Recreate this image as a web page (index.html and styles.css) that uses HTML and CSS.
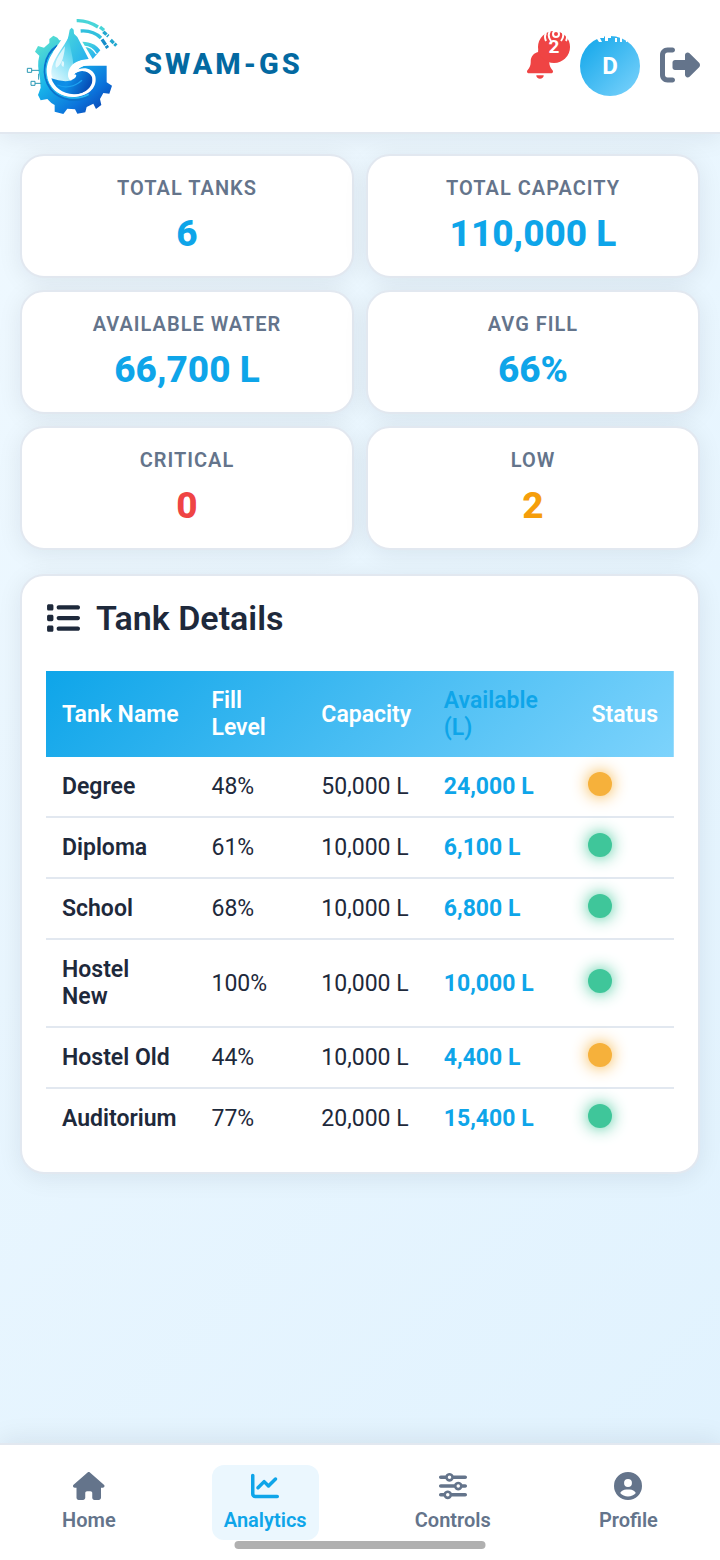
FILE: index.html
```html
<!DOCTYPE html>
<html lang="en">
  <head>
    <meta charset="UTF-8" />
    <meta name="viewport" content="width=device-width, initial-scale=1.0" />
    <title>SWAM-GS - Analytics</title>
    <link rel="stylesheet" href="styles.css">
  </head>
  <body>
    <header class="header">
      <div class="brand">
        <svg class="logo" viewBox="0 -3 312 312" aria-hidden="true">
          <defs>
            <linearGradient id="gear" x1="0.1" y1="0" x2="0.9" y2="1">
              <stop offset="0" stop-color="#5fe3cf" />
              <stop offset="0.4" stop-color="#18b4ea" />
              <stop offset="0.75" stop-color="#0b74dc" />
              <stop offset="1" stop-color="#0a3fae" />
            </linearGradient>
            <linearGradient id="sky" x1="0" y1="0" x2="1" y2="1">
              <stop offset="0" stop-color="#4edbd9" />
              <stop offset="1" stop-color="#1fa9f2" />
            </linearGradient>
            <linearGradient id="drop" x1="0.8" y1="0" x2="0.3" y2="1">
              <stop offset="0" stop-color="#35c9e6" />
              <stop offset="0.6" stop-color="#9be6f8" />
              <stop offset="1" stop-color="#d9f6fd" />
            </linearGradient>
            <linearGradient id="wave" x1="0" y1="0" x2="1" y2="0.3">
              <stop offset="0" stop-color="#0a86dc" />
              <stop offset="0.5" stop-color="#0e8fe8" />
              <stop offset="1" stop-color="#0750b8" />
            </linearGradient>
          </defs>
          <!-- gear -->
          <path fill="url(#gear)" d="M138 74L118 76L112 68L100 62L88 72L88 84L72 98L54 93L45 110L58 122Q50 150 60 190L62 218L54 240L62 256L82 252Q92 264 104 270L104 290L130 297L142 281L165 283L172 296L196 292L200 276L220 266L228 282L244 270L240 252L250 234L268 236L276 212L260 202L260 152L160 152Z" />
          <path fill="none" stroke="#0a73cd" stroke-width="6" d="M112 92C70 120 62 180 92 222C120 258 175 266 214 240" />
          <path fill="none" stroke="#2ab9f0" stroke-width="5" d="M104 108C72 140 70 184 98 220C124 250 170 258 206 238" />
          <!-- circuit nodes -->
          <g fill="none" stroke="#2a98b4" stroke-width="3">
            <path d="M22 160H35V172H22ZM35 166H58M33 199H45V211H33ZM45 205H64M56 176V194" />
          </g>
          <!-- white outline of the drop -->
          <path fill="#fff" d="M148 38L164 42L178 56L222 138L180 158L150 190L90 180L100 110Z" />
          <path fill="#fff" d="M146 52C122 86 78 122 80 172C84 222 122 248 164 246C212 242 232 214 226 184C218 158 186 154 166 168C178 134 150 100 146 52Z" />
          <!-- sky and drop -->
          <path fill="url(#sky)" d="M146 60L149 44L155 38L161 44L162 56L172 66L206 132C176 134 158 146 148 168L126 160Z" />
          <path fill="url(#drop)" d="M147 64C130 100 96 134 94 168C92 190 106 204 132 203L152 196C140 184 146 164 160 148C158 118 148 94 147 64Z" />
          <path fill="#fff" opacity="0.7" d="M135 94C114 124 102 142 108 158C120 156 132 134 135 94ZM127 138Q136 140 130 156Q120 152 127 138Z" />
          <!-- wave -->
          <path fill="url(#wave)" d="M94 190C118 198 146 204 164 190C174 180 166 176 162 180C172 164 204 160 216 182C224 212 198 238 162 238C126 236 102 216 94 190Z" />
          <path fill="none" stroke="#1ea3f0" stroke-width="4" d="M112 210C136 220 164 216 186 196" />
          <path fill="none" stroke="#fff" stroke-width="6" stroke-linecap="round" d="M86 190C96 226 128 243 162 242C202 240 226 214 220 188C212 164 184 160 168 170" />
          <path fill="#fff" d="M263 150H210C180 152 166 164 162 182C152 184 148 192 156 198C142 194 142 176 148 162C158 142 176 134 204 134H240L263 140Z" />
          <!-- signal arcs -->
          <path fill="url(#sky)" d="M187 80C212 80 232 92 241 106L218 132Z" />
          <path fill="none" stroke="#fff" stroke-width="4" d="M193 94C208 94 220 102 229 117" />
          <g fill="none" stroke-width="10">
            <path stroke="#48d5d8" d="M170 17C192 16 214 23 234 36M240 36L252 46" />
            <path stroke="#22a7cf" d="M250 50L265 64M272 75L289 92" stroke-dasharray="13 3" />
            <path stroke="#31c0de" d="M182 48C208 46 228 54 243 69" />
            <path stroke="#158dca" d="M246 73L263 99" stroke-dasharray="20 3" />
          </g>
        </svg>
        <h1 class="brand-name">SWAM-GS</h1>
      </div>

      <div class="header-actions">
        <button class="icon-button bell-button" aria-label="Notifications">
          <svg class="bell-icon" viewBox="0 0 448 512" fill="currentColor"><path d="M224 0c-17.700 0-32 14.300-32 32V51.200C119 66 64 130.600 64 208v18.800c0 47-17.300 92.400-48.500 127.600l-7.400 8.300c-8.400 9.400-10.400 22.900-5.300 34.400S19.400 416 32 416H416c12.600 0 24-7.400 29.200-18.900s3.100-25-5.300-34.400l-7.400-8.300C401.300 319.200 384 273.900 384 226.800V208c0-77.400-55-142-128-156.800V32c0-17.700-14.300-32-32-32zm45.300 493.300c12-12 18.700-28.300 18.700-45.300H160c0 17 6.700 33.300 18.700 45.300s28.300 18.700 45.300 18.700s33.300-6.700 45.300-18.700z" /></svg>
          <span class="badge">
            <svg class="badge-signal" viewBox="0 0 24 12" fill="none" stroke="#fff" stroke-width="2" aria-hidden="true">
              <circle cx="12" cy="3" r="3" />
              <path d="M6 0Q3 5 7 10M18 0Q21 5 17 10M2 2Q0 6 2 10M22 2Q24 6 22 10" />
            </svg>
            2
          </span>
        </button>
        <button class="avatar" aria-label="Account">
          <svg class="avatar-marks" viewBox="0 0 34 8" fill="#fff" aria-hidden="true">
            <path d="M0 3L4 3L6 6L9 6L7 2H11V0H0ZM12 0H18V2H15V5H12ZM22 2H24V6H22ZM27 1H29V6H27ZM33 0H34V6H33Z" />
          </svg>
          D
        </button>
        <button class="icon-button logout-button" aria-label="Log out">
          <svg class="logout-icon" viewBox="0 0 512 512" fill="currentColor"><path d="M377.900 105.900L500.700 228.700c7.200 7.200 11.300 17.100 11.300 27.300s-4.100 20.100-11.300 27.300L377.900 406.100c-6.400 6.400-15 9.900-24 9.900c-18.700 0-33.900-15.200-33.900-33.900l0-62.100-128 0c-17.700 0-32-14.300-32-32l0-64c0-17.700 14.300-32 32-32l128 0 0-62.100c0-18.700 15.200-33.900 33.900-33.900c9 0 17.600 3.600 24 9.900zM160 96L96 96c-17.700 0-32 14.300-32 32l0 256c0 17.700 14.300 32 32 32l64 0c17.700 0 32 14.300 32 32s-14.300 32-32 32l-64 0c-53 0-96-43-96-96L0 128C0 75 43 32 96 32l64 0c17.700 0 32 14.300 32 32s-14.300 32-32 32z" /></svg>
        </button>
      </div>
    </header>

    <main class="content">
      <section class="stats">
        <div class="stat-card">
          <div class="stat-label">Total Tanks</div>
          <div class="stat-value">6</div>
        </div>
        <div class="stat-card">
          <div class="stat-label">Total Capacity</div>
          <div class="stat-value">110,000 L</div>
        </div>
        <div class="stat-card">
          <div class="stat-label">Available Water</div>
          <div class="stat-value">66,700 L</div>
        </div>
        <div class="stat-card">
          <div class="stat-label">Avg Fill</div>
          <div class="stat-value">66%</div>
        </div>
        <div class="stat-card">
          <div class="stat-label">Critical</div>
          <div class="stat-value critical">0</div>
        </div>
        <div class="stat-card">
          <div class="stat-label">Low</div>
          <div class="stat-value low">2</div>
        </div>
      </section>

      <section class="details-card">
        <h2 class="details-title">
          <svg class="list-icon" viewBox="0 0 512 512" fill="currentColor" aria-hidden="true"><path d="M40 48C26.700 48 16 58.700 16 72v48c0 13.300 10.700 24 24 24H88c13.300 0 24-10.700 24-24V72c0-13.300-10.700-24-24-24H40zM192 64c-17.700 0-32 14.300-32 32s14.300 32 32 32H480c17.700 0 32-14.300 32-32s-14.300-32-32-32H192zm0 160c-17.700 0-32 14.300-32 32s14.300 32 32 32H480c17.700 0 32-14.300 32-32s-14.300-32-32-32H192zm0 160c-17.700 0-32 14.300-32 32s14.300 32 32 32H480c17.700 0 32-14.300 32-32s-14.300-32-32-32H192zM16 232v48c0 13.300 10.700 24 24 24H88c13.300 0 24-10.700 24-24V232c0-13.300-10.700-24-24-24H40c-13.300 0-24 10.700-24 24zM40 368c-13.300 0-24 10.700-24 24v48c0 13.300 10.700 24 24 24H88c13.300 0 24-10.700 24-24V392c0-13.300-10.700-24-24-24H40z" /></svg>
          Tank Details
        </h2>
        <table class="tank-table">
          <colgroup>
            <col class="col-name">
            <col class="col-fill">
            <col class="col-capacity">
            <col class="col-available">
            <col class="col-status">
          </colgroup>
          <thead>
            <tr>
              <th>Tank Name</th>
              <th>Fill Level</th>
              <th>Capacity</th>
              <th class="available">Available (L)</th>
              <th class="status">Status</th>
            </tr>
          </thead>
          <tbody>
            <tr>
              <td class="name">Degree</td>
              <td>48%</td>
              <td>50,000 L</td>
              <td class="available">24,000 L</td>
              <td><span class="dot dot-low"></span></td>
            </tr>
            <tr>
              <td class="name">Diploma</td>
              <td>61%</td>
              <td>10,000 L</td>
              <td class="available">6,100 L</td>
              <td><span class="dot"></span></td>
            </tr>
            <tr>
              <td class="name">School</td>
              <td>68%</td>
              <td>10,000 L</td>
              <td class="available">6,800 L</td>
              <td><span class="dot"></span></td>
            </tr>
            <tr>
              <td class="name">Hostel New</td>
              <td>100%</td>
              <td>10,000 L</td>
              <td class="available">10,000 L</td>
              <td><span class="dot"></span></td>
            </tr>
            <tr>
              <td class="name">Hostel Old</td>
              <td>44%</td>
              <td>10,000 L</td>
              <td class="available">4,400 L</td>
              <td><span class="dot dot-low"></span></td>
            </tr>
            <tr>
              <td class="name">Auditorium</td>
              <td>77%</td>
              <td>20,000 L</td>
              <td class="available">15,400 L</td>
              <td><span class="dot"></span></td>
            </tr>
          </tbody>
        </table>
      </section>
    </main>

    <nav class="bottom-nav">
      <a href="#home" class="nav-item">
        <svg class="nav-icon" viewBox="0 0 576 512" fill="currentColor"><path d="M575.800 255.500c0 18-15 32.100-32 32.100h-32l.7 160.200c0 2.700-.2 5.400-.5 8.100V472c0 22.100-17.900 40-40 40H392c-22.100 0-40-17.900-40-40V384c0-17.700-14.300-32-32-32H256c-17.700 0-32 14.300-32 32v88c0 22.100-17.900 40-40 40H104c-22.100 0-40-17.900-40-40V287.600H32c-18 0-32-14-32-32.100c0-9 3-17 10-24L266.400 8c7-7 15-8 22-8s15 2 21 7L564.800 231.500c8 7 12 15 11 24z" /></svg>
        <span>Home</span>
      </a>
      <a href="#analytics" class="nav-item active">
        <svg class="nav-icon" viewBox="0 0 512 512" fill="currentColor"><path d="M64 64c0-17.700-14.300-32-32-32S0 46.300 0 64V400c0 44.200 35.800 80 80 80H480c17.700 0 32-14.300 32-32s-14.300-32-32-32H80c-8.800 0-16-7.200-16-16V64zm406.600 86.600c12.500-12.500 12.500-32.800 0-45.300s-32.800-12.500-45.300 0L320 210.700l-57.400-57.400c-12.500-12.500-32.800-12.500-45.300 0l-112 112c-12.500 12.500-12.500 32.800 0 45.300s32.800 12.500 45.300 0L240 221.300l57.400 57.400c12.500 12.500 32.800 12.500 45.300 0l128-128z" /></svg>
        <span>Analytics</span>
      </a>
      <a href="#controls" class="nav-item">
        <svg class="nav-icon" viewBox="0 0 512 512" fill="currentColor"><path d="M0 416c0 17.700 14.300 32 32 32l54.700 0c12.300 28.300 40.500 48 73.300 48s61-19.700 73.300-48L480 448c17.700 0 32-14.300 32-32s-14.300-32-32-32l-246.700 0c-12.300-28.300-40.500-48-73.300-48s-61 19.700-73.300 48L32 384c-17.700 0-32 14.300-32 32zm128 0a32 32 0 1 1 64 0 32 32 0 1 1 -64 0zM320 256a32 32 0 1 1 64 0 32 32 0 1 1 -64 0zm32-80c-32.800 0-61 19.700-73.300 48L32 224c-17.700 0-32 14.300-32 32s14.300 32 32 32l246.700 0c12.300 28.300 40.500 48 73.300 48s61-19.700 73.300-48l54.700 0c17.700 0 32-14.300 32-32s-14.300-32-32-32l-54.700 0c-12.300-28.300-40.500-48-73.300-48zM192 128a32 32 0 1 1 0-64 32 32 0 1 1 0 64zm73.300-64C253 35.700 224.800 16 192 16s-61 19.700-73.300 48L32 64C14.300 64 0 78.300 0 96s14.300 32 32 32l86.700 0c12.300 28.300 40.500 48 73.300 48s61-19.700 73.300-48L480 128c17.700 0 32-14.300 32-32s-14.300-32-32-32L265.300 64z" /></svg>
        <span>Controls</span>
      </a>
      <a href="#profile" class="nav-item">
        <svg class="nav-icon" viewBox="0 0 512 512" fill="currentColor"><path d="M399 384.200C376.900 345.800 335.400 320 288 320H224c-47.400 0-88.900 25.800-111 64.200c35.200 39.200 86.200 63.800 143 63.800s107.800-24.700 143-63.800zM0 256a256 256 0 1 1 512 0A256 256 0 1 1 0 256zm256 16a72 72 0 1 0 0-144 72 72 0 1 0 0 144z" /></svg>
        <span>Profile</span>
      </a>
      <div class="gesture-bar"></div>
    </nav>
  </body>
</html>
```
FILE: styles.css
```css
* {
  margin: 0;
  padding: 0;
  box-sizing: border-box;
}

body {
  font-family: Roboto, "Liberation Sans", sans-serif;
  background: linear-gradient(135deg, #f0f9ff 0%, #e0f2fe 100%);
  color: #1e293b;
  min-height: 100vh;
  display: flex;
  flex-direction: column;
}

button {
  font-family: inherit;
  border: none;
  background: none;
  cursor: pointer;
}

/* Header */
.header {
  display: flex;
  align-items: center;
  justify-content: space-between;
  padding: 14px 20px;
  background: #fff;
  border-bottom: 2px solid #e2e8f0;
  box-shadow: 0 4px 24px rgba(15, 23, 42, 0.08);
}

.brand {
  display: flex;
  align-items: center;
  gap: 20px;
}

.logo {
  width: 104px;
  height: 104px;
}

.brand-name {
  padding-bottom: 4px;
  font-size: 29px;
  font-weight: 800;
  letter-spacing: 3px;
  color: #0369a1;
}

.header-actions {
  display: flex;
  align-items: center;
  gap: 20px;
}

.icon-button {
  display: flex;
  align-items: center;
  justify-content: center;
  width: 40px;
  height: 40px;
  padding-bottom: 2px;
}

.bell-button {
  position: relative;
  padding-bottom: 4px;
  color: #ef4444;
}

.bell-icon {
  width: 26px;
  height: 30px;
}

.badge {
  position: absolute;
  top: -15px;
  right: -10px;
  width: 32px;
  height: 32px;
  border-radius: 50%;
  background: #ef4444;
  color: #fff;
  font-size: 19px;
  font-weight: 700;
  line-height: 32px;
  text-align: center;
}

.badge-signal {
  position: absolute;
  top: 0;
  left: 6px;
  width: 24px;
  height: 12px;
}

.avatar {
  position: relative;
  width: 60px;
  height: 60px;
  border-radius: 50%;
  background: linear-gradient(135deg, #0ea5e9, #7dd3fc);
  color: #fff;
  font-size: 24px;
  font-weight: 700;
}

.avatar-marks {
  position: absolute;
  top: 0;
  left: 13px;
  width: 34px;
  height: 8px;
}

.logout-button {
  color: #64748b;
}

.logout-icon {
  width: 40px;
  height: 40px;
}

/* Stats */
.content {
  flex: 1;
  padding: 20px;
}

.stats {
  display: grid;
  grid-template-columns: 1fr 1fr;
  gap: 12px;
  margin-bottom: 24px;
}

.stat-card,
.details-card {
  background: #fff;
  border: 2px solid #e2e8f0;
  border-radius: 24px;
  box-shadow: 0 4px 24px rgba(15, 23, 42, 0.08);
}

.stat-card {
  padding: 20px;
  text-align: center;
}

.stat-label {
  margin-bottom: 12px;
  font-size: 20px;
  font-weight: 600;
  line-height: 24px;
  letter-spacing: 1px;
  text-transform: uppercase;
  color: #64748b;
}

.stat-value {
  font-size: 37px;
  font-weight: 800;
  line-height: 44px;
  color: #0ea5e9;
}

.stat-value.critical {
  color: #ef4444;
}

.stat-value.low {
  color: #f59e0b;
}

/* Tank table */
.details-card {
  padding: 24px;
}

.details-title {
  display: flex;
  align-items: center;
  gap: 16px;
  margin-bottom: 35px;
  font-size: 34px;
  font-weight: 600;
  line-height: 36px;
}

.list-icon {
  width: 34px;
  height: 34px;
}

.tank-table {
  width: 100%;
  table-layout: fixed;
  border-collapse: separate;
  border-spacing: 0;
  font-size: 23px;
  line-height: 27px;
}

.col-name {
  width: 23.8%;
}

.col-fill {
  width: 17.5%;
}

.col-capacity {
  width: 19.5%;
}

.col-available {
  width: 23%;
}

.tank-table thead {
  background: linear-gradient(135deg, #0ea5e9, #7dd3fc);
  color: #fff;
}

.tank-table th,
.tank-table td {
  padding: 16px;
  text-align: left;
}

.tank-table th {
  font-weight: 600;
}

.tank-table th.status {
  text-align: right;
}

.tank-table td {
  border-bottom: 2px solid #e2e8f0;
}

.tank-table tr:last-child td {
  border-bottom: none;
}

.tank-table .name {
  font-weight: 600;
}

.tank-table .available {
  font-weight: 600;
  color: #0ea5e9;
}

.tank-table td.available {
  font-weight: 700;
}

.dot {
  display: block;
  width: 24px;
  height: 24px;
  margin: -1px 0 4px;
  border-radius: 50%;
  background: #10b981;
  box-shadow: 0 0 16px #10b981;
  opacity: 0.8;
}

.dot-low {
  background: #f59e0b;
  box-shadow: 0 0 16px #f59e0b;
}

/* Bottom navigation */
.bottom-nav {
  position: sticky;
  bottom: 0;
  display: flex;
  justify-content: space-around;
  padding: 20px 8px;
  background: #fff;
  border-top: 2px solid #e2e8f0;
  box-shadow: 0 -4px 24px rgba(15, 23, 42, 0.08);
}

.nav-item {
  display: flex;
  flex-direction: column;
  align-items: center;
  gap: 8px;
  padding: 7px 12px 8px;
  border-radius: 12px;
  color: #64748b;
  font-size: 20px;
  font-weight: 600;
  line-height: 24px;
  text-decoration: none;
}

.nav-item.active {
  background: #ebf7fe;
  color: #0ea5e9;
}

.nav-icon {
  height: 28px;
}

.gesture-bar {
  position: absolute;
  bottom: 11px;
  left: 50%;
  width: 251px;
  height: 8px;
  border-radius: 4px;
  background: #b0b0b0;
  transform: translateX(-50%);
}
```
